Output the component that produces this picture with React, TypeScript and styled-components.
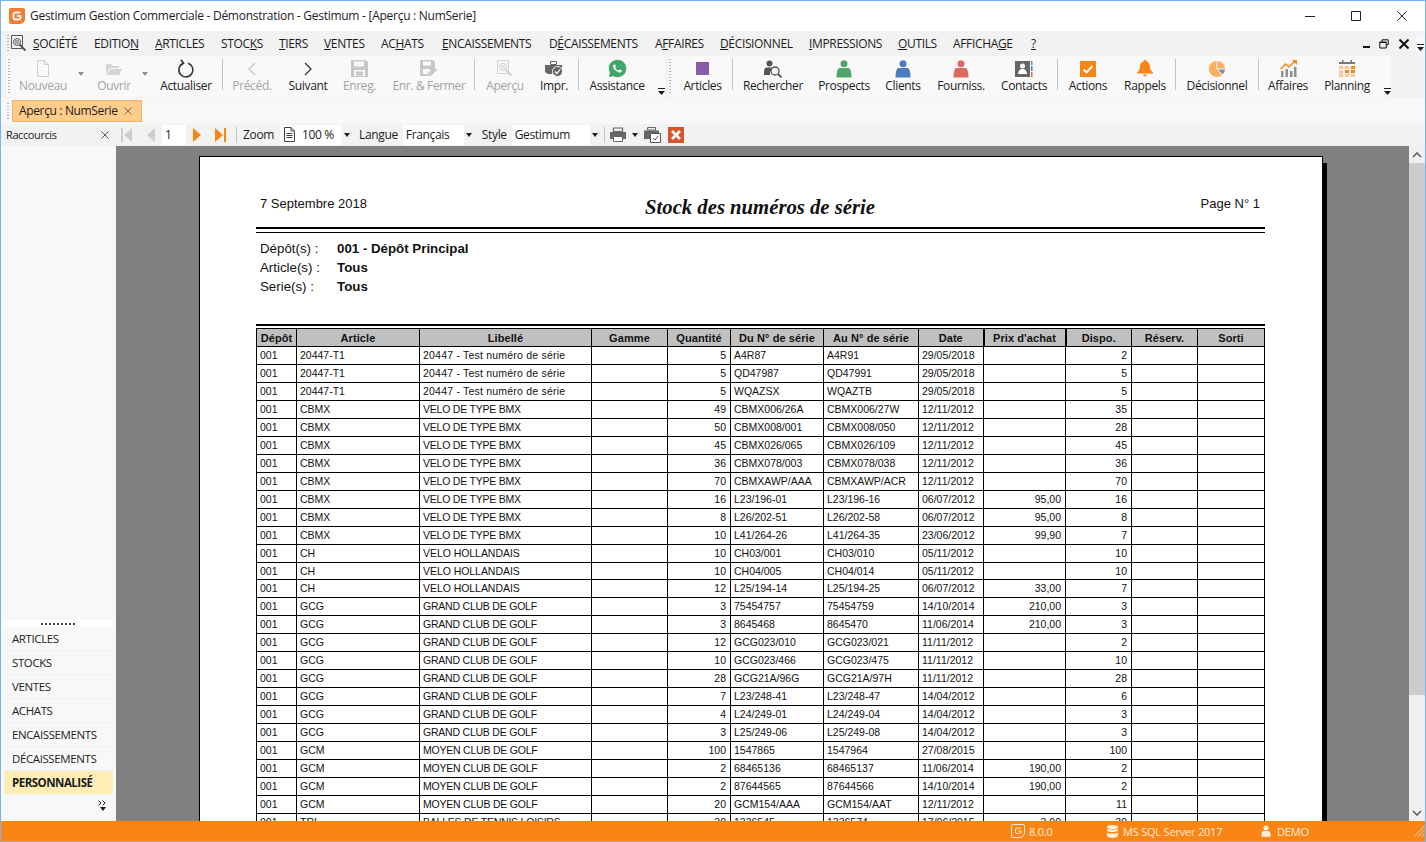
import React from 'react';
import styled, { createGlobalStyle } from 'styled-components';
import { RiWhatsappFill } from 'react-icons/ri';

const uiFont = `'Open Sans', 'Noto Sans', sans-serif`;
const paperFont = `'Liberation Sans', Arial, sans-serif`;

const GlobalStyle = createGlobalStyle`
  html, body {
    margin: 0;
    padding: 0;
    background: #fff;
  }
  * {
    box-sizing: border-box;
  }
`;

const Window = styled.div`
  width: 1426px;
  height: 842px;
  display: flex;
  flex-direction: column;
  overflow: hidden;
  border: 1px solid #74b6f4;
  font-family: ${uiFont};
  font-size: 12px;
  letter-spacing: -0.35px;
  color: #1c1c1c;
`;

const TitleBar = styled.div`
  height: 30px;
  flex: none;
  display: flex;
  align-items: center;
  padding-left: 8px;
  background: #fff;
`;

const TitleText = styled.div`
  margin-left: 5px;
  padding-bottom: 1px;
  font-size: 12px;
  letter-spacing: -0.27px;
`;

const WindowButtons = styled.div`
  margin-left: auto;
  display: flex;
`;

const WindowButton = styled.div`
  width: 46px;
  height: 30px;
  display: flex;
  align-items: center;
  justify-content: center;
`;

const MenuBar = styled.div`
  height: 25px;
  flex: none;
  display: flex;
  align-items: center;
  background: #f2f2f2;
  padding-left: 6px;
`;

const Grip = styled.div<{ $h: number; $mr?: number }>`
  width: 2px;
  height: ${(p) => p.$h}px;
  flex: none;
  margin-right: ${(p) => p.$mr ?? 0}px;
  background-image: linear-gradient(#b5b5b5 50%, transparent 50%);
  background-size: 2px 3px;
`;

const MenuIcon = styled.div`
  width: 24px;
  flex: none;
  display: flex;
  padding-left: 2px;
`;

const MenuItem = styled.div<{ $w: number }>`
  width: ${(p) => p.$w}px;
  flex: none;
  white-space: nowrap;
  font-size: 12px;
`;

const Key = styled.span`
  text-decoration: underline;
`;

const MdiButtons = styled.div`
  margin-left: auto;
  display: flex;
  align-items: center;
  gap: 7px;
  height: 100%;
`;

const MdiClose = styled.div`
  display: flex;
  margin-left: 3px;
`;

const MenuOverflow = styled.div`
  width: 9px;
  height: 21px;
  background: #f8f8f8;
  display: flex;
  align-items: flex-end;
  justify-content: center;
  padding-bottom: 3px;
`;

const ToolRow = styled.div`
  height: 42px;
  flex: none;
  display: flex;
  background: #f2f2f2;
  padding-left: 6px;
`;

const ToolGroup = styled.div<{ $ml?: number }>`
  height: 41px;
  display: flex;
  align-items: flex-start;
  margin-left: ${(p) => p.$ml ?? 0}px;
  background: #f9f9f9;
  border-radius: 0 4px 4px 0;
  padding: 3px 0 0 1px;
`;

const ToolButton = styled.div<{ $w: number; $off?: boolean }>`
  width: ${(p) => p.$w}px;
  flex: none;
  display: flex;
  flex-direction: column;
  align-items: center;
  color: ${(p) => (p.$off ? '#a3a3a3' : '#1c1c1c')};
`;

const ToolIcon = styled.div`
  height: 19px;
  display: flex;
  align-items: center;
  justify-content: center;
`;

const ToolLabel = styled.div`
  height: 18px;
  margin-top: -1px;
  line-height: 18px;
  white-space: nowrap;
`;

const ToolSep = styled.div<{ $ml?: number }>`
  width: 1px;
  height: 31px;
  flex: none;
  margin-left: ${(p) => p.$ml ?? 0}px;
  background: #c4c4c4;
`;

const ArrowSlot = styled.div<{ $w: number; $off?: boolean }>`
  width: ${(p) => p.$w}px;
  flex: none;
  padding-top: 13px;
  display: flex;
  justify-content: center;
`;

const Caret = styled.div<{ $c?: string }>`
  width: 0;
  height: 0;
  border-left: 3.5px solid transparent;
  border-right: 3.5px solid transparent;
  border-top: 4px solid ${(p) => p.$c ?? '#1c1c1c'};
`;

const OverflowSlot = styled.div<{ $w: number }>`
  width: ${(p) => p.$w}px;
  height: 36px;
  flex: none;
  display: flex;
  align-items: flex-end;
  justify-content: flex-end;
`;

const TabRow = styled.div`
  height: 26px;
  flex: none;
  display: flex;
  align-items: center;
  background: #f8f8f8;
  padding-left: 6px;
`;

const Tab = styled.div`
  width: 130px;
  height: 22px;
  margin-left: 3px;
  display: flex;
  align-items: center;
  gap: 6px;
  padding: 0 0 1px 6px;
  background: #ffcc8c;
  border: 1px solid #f5b06c;
`;

const NavRow = styled.div`
  height: 22px;
  flex: none;
  display: flex;
  align-items: center;
  padding-bottom: 1px;
  background: #f2f2f2;
`;

const ShortcutHead = styled.div`
  width: 115px;
  flex: none;
  display: flex;
  align-items: center;
  justify-content: space-between;
  padding: 0 7px 0 5px;
  font-size: 11px;
  letter-spacing: -0.4px;
`;

const NavSlot = styled.div<{ $w: number; $ml?: number }>`
  width: ${(p) => p.$w}px;
  margin-left: ${(p) => p.$ml ?? 0}px;
  flex: none;
  display: flex;
  align-items: center;
  justify-content: center;
`;

const NavLabel = styled.div<{ $ml: number }>`
  margin-left: ${(p) => p.$ml}px;
  white-space: nowrap;
`;

const NavSep = styled.div<{ $ml: number }>`
  width: 1px;
  height: 16px;
  margin-left: ${(p) => p.$ml}px;
  flex: none;
  background: #c4c4c4;
`;

const Field = styled.div<{ $w: number; $ml: number }>`
  width: ${(p) => p.$w}px;
  height: 20px;
  margin-left: ${(p) => p.$ml}px;
  flex: none;
  display: flex;
  align-items: center;
  background: #fff;
  padding-left: 3px;
  white-space: nowrap;
`;

const FieldButton = styled.div`
  width: 11px;
  height: 100%;
  margin-left: auto;
  display: flex;
  align-items: center;
  justify-content: center;
  background: #f2f2f2;
`;

const Body = styled.div`
  flex: 1;
  min-height: 0;
  display: flex;
`;

const Sidebar = styled.div`
  width: 115px;
  flex: none;
  display: flex;
  flex-direction: column;
  justify-content: flex-end;
  background: #f8f8f8;
  padding: 0 3px 4px 3px;
`;

const SideGrip = styled.div`
  height: 7px;
  display: flex;
  align-items: center;
  justify-content: center;
  background: #fff;
  &::before {
    content: '';
    width: 35px;
    height: 2px;
    background-image: linear-gradient(90deg, #3c4a44 50%, transparent 50%);
    background-size: 4px 2px;
  }
`;

const SideItem = styled.div<{ $on?: boolean }>`
  height: 24px;
  display: flex;
  align-items: center;
  padding-left: 8px;
  border-bottom: 1px solid #f1f1f1;
  font-size: 11.5px;
  font-weight: ${(p) => (p.$on ? 700 : 400)};
  letter-spacing: ${(p) => (p.$on ? '-0.5px' : '-0.4px')};
  background: ${(p) => (p.$on ? '#ffedb5' : 'transparent')};
`;

const SideMore = styled.div`
  height: 22px;
  display: flex;
  flex-direction: column;
  align-items: flex-end;
  padding: 5px 7px 0 0;
  gap: 1px;
`;

const Preview = styled.div`
  flex: 1;
  min-width: 0;
  overflow: hidden;
  background: #808080;
  padding: 10px 0 0 83px;
`;

const Page = styled.div`
  width: 1124px;
  height: 900px;
  background: #fff;
  border: 1px solid #000;
  box-shadow: 4px 7px 0 #000;
  padding: 0 56px;
  color: #111;
  font-family: ${paperFont};
  letter-spacing: 0;
`;

const PageHead = styled.div`
  display: grid;
  grid-template-columns: 1fr auto 1fr;
  height: 70px;
  padding: 39px 6px 0 4px;
  font-size: 13px;
  line-height: 16px;
`;

const ReportTitle = styled.div`
  font-family: 'Liberation Serif', 'Times New Roman', serif;
  font-size: 20.7px;
  font-weight: 700;
  font-style: italic;
  line-height: 22px;
`;

const RightText = styled.div`
  text-align: right;
`;

const DoubleRule = styled.div`
  height: 6px;
  width: 1009px;
  border-top: 2px solid #000;
  border-bottom: 1px solid #000;
`;

const Filters = styled.div`
  padding: 6px 0 0 4px;
  height: 91px;
`;

const FilterRow = styled.div`
  height: 19px;
  display: flex;
  align-items: center;
  font-size: 13.3px;
`;

const FilterLabel = styled.div`
  width: 77px;
`;

const FilterValue = styled.div`
  font-weight: 700;
`;

const HeavyRule = styled.div`
  height: 2px;
  width: 1009px;
  margin-bottom: 2px;
  background: #000;
`;

const Sheet = styled.table`
  width: 1008px;
  table-layout: fixed;
  border-collapse: collapse;
  font-size: 10.5px;
  line-height: 12px;
`;

const HeadCell = styled.th<{ $thick?: boolean }>`
  height: 18px;
  padding: 0;
  text-align: center;
  font-size: 11px;
  letter-spacing: 0.08px;
  font-weight: 700;
  background: #c0c0c0;
  border: 1px solid #000;
  border-left-width: ${(p) => (p.$thick ? 2 : 1)}px;
  white-space: nowrap;
  overflow: hidden;
`;

const Row = styled.tr<{ $h: number }>`
  height: ${(p) => p.$h}px;
`;

const Cell = styled.td<{ $num?: boolean; $track?: number }>`
  padding: 0 ${(p) => (p.$num ? 4 : 2)}px 1px 3px;
  border: 1px solid #000;
  text-align: ${(p) => (p.$num ? 'right' : 'left')};
  letter-spacing: ${(p) => p.$track ?? 0}px;
  white-space: nowrap;
  overflow: hidden;
`;

const ScrollBar = styled.div`
  width: 16px;
  flex: none;
  display: flex;
  flex-direction: column;
  background: #f0f0f0;
`;

const ScrollEnd = styled.div`
  height: 17px;
  flex: none;
  display: flex;
  align-items: center;
  justify-content: center;
`;

const ScrollThumb = styled.div`
  height: 532px;
  flex: none;
  background: #cdcdcd;
`;

const ScrollGap = styled.div`
  flex: 1;
`;

const StatusBar = styled.div`
  height: 20px;
  flex: none;
  display: flex;
  align-items: center;
  padding-left: 1010px;
  background: #f98516;
  color: #ffeeda;
  font-size: 11px;
  letter-spacing: -0.2px;
`;

const StatusItem = styled.div<{ $w: number; $gap: number }>`
  width: ${(p) => p.$w}px;
  flex: none;
  display: flex;
  align-items: center;
  gap: ${(p) => p.$gap}px;
  white-space: nowrap;
`;

const StatusGrip = styled.div`
  margin-left: auto;
  display: flex;
`;

type IconProps = { c?: string };

const DocIcon = () => (
  <svg width="18" height="19" viewBox="0 0 18 19" fill="none" stroke="#cfcfcf">
    <path d="M3.500 1.500h7l4 4v12h-11zM10.500 1.500v4h4" />
  </svg>
);

const FolderIcon = () => (
  <svg width="18" height="15" viewBox="0 0 18 15" fill="#d4d4d4">
    <path d="M1 3h5l2 2h6v2H5L1 13z" />
    <path d="M5.500 8H17l-3 6H1.500z" />
  </svg>
);

const RefreshIcon = () => (
  <svg width="18" height="19" viewBox="0 0 18 19" fill="none" stroke="#333" strokeWidth="1.500">
    <path d="M6 4.500a7 7 0 1 0 5-.3" />
    <path d="M4 .8l2.600 3.500-3.600 2" />
  </svg>
);

const ChevronIcon = ({ left, c }: { left?: boolean; c: string }) => (
  <svg width="10" height="14" viewBox="0 0 10 14" fill="none" stroke={c} strokeWidth="1.300">
    <path d={left ? 'M8 1L2 7l6 6' : 'M2 1l6 6-6 6'} />
  </svg>
);

const FloppyIcon = () => (
  <svg width="17" height="17" viewBox="0 0 17 17">
    <path fill="#c8c8c8" d="M0 0h15l2 2v15H0z" />
    <path fill="#f9f9f9" d="M3 1.500h10v5H3zM3 10h11v6H3z" />
    <path fill="#c8c8c8" d="M5 11.500h7v4H5z" />
  </svg>
);

const FloppyCheckIcon = () => (
  <svg width="18" height="18" viewBox="0 0 18 18">
    <path fill="#c8c8c8" d="M0 0h13l2 2v9l-5 5H0z" />
    <path fill="#f9f9f9" d="M3 1.500h8v4H3zM3 9h7v5H3z" />
    <path d="M8 12l3 3 6-6" fill="none" stroke="#c8c8c8" strokeWidth="1.500" />
  </svg>
);

const PreviewIcon = ({ c = '#d0d0d0' }: IconProps) => (
  <svg width="16" height="17" viewBox="0 0 16 17" fill="none" stroke={c}>
    <path d="M.5.5h11v13H.5z" />
    <circle cx="6" cy="7" r="3.500" />
    <path d="M8.500 9.500l6 6" strokeWidth="2" />
    <path d="M4 6h4M4 8h4" />
  </svg>
);

const PrinterCheckIcon = () => (
  <svg width="18" height="18" viewBox="0 0 18 18">
    <path fill="none" stroke="#666" d="M5.500 1.500h6v3h-6z" />
    <path fill="#666" d="M0 5h17v9H3l-3-2z" />
    <circle cx="12.500" cy="11.500" r="5" fill="#666" stroke="#f9f9f9" />
    <path d="M10 11.500l2 2 3-4" fill="none" stroke="#fff" strokeWidth="1.200" />
  </svg>
);

const PersonIcon = ({ c = '#000' }: IconProps) => (
  <svg width="16" height="18" viewBox="0 0 16 18" fill={c}>
    <circle cx="8" cy="3.800" r="3.500" />
    <path d="M3.500 8h9c1.500 0 3 3 3 9.500H.5C.5 11 2 8 3.500 8z" />
  </svg>
);

const SearchPersonIcon = () => (
  <svg width="19" height="18" viewBox="0 0 19 18">
    <circle cx="5.500" cy="3.500" r="3" fill="#555" />
    <path fill="#555" d="M2 7.500h7L6 12v3H0v-3c0-2 .8-4.500 2-4.500z" />
    <circle cx="11" cy="11" r="4" fill="#f9f9f9" stroke="#555" strokeWidth="1.300" />
    <path d="M14 14l3.500 3.500" stroke="#555" strokeWidth="1.800" />
  </svg>
);

const ContactsIcon = () => (
  <svg width="18" height="16" viewBox="0 0 18 16">
    <path fill="#666" d="M0 0h15v16H0z" />
    <circle cx="7.500" cy="5" r="2.500" fill="#fff" />
    <path fill="#fff" d="M3 13c0-3 1.500-5 4.500-5s4.500 2 4.500 5z" />
    <path fill="#5aa870" d="M16 0h1.500v4H16z" />
    <path fill="#4a7dbd" d="M16 5h1.500v5H16z" />
    <path fill="#e0695f" d="M16 11h1.500v5H16z" />
  </svg>
);

const ActionsIcon = () => (
  <svg width="16" height="16" viewBox="0 0 16 16">
    <path fill="#f98516" d="M0 0h16v16H0z" />
    <path d="M3.500 8.500l3 3 6-6.500" fill="none" stroke="#fff" strokeWidth="1.900" />
  </svg>
);

const BellIcon = () => (
  <svg width="16" height="18" viewBox="0 0 16 18" fill="#f98516">
    <path d="M8 0c1 0 1.400.6 1.400 1.300C12 2 12.800 4.200 13 7c.2 2.600 1.300 4 3 5.500v1H0v-1C1.700 11 2.800 9.600 3 7c.2-2.800 1-5 3.600-5.700C6.600.6 7 0 8 0z" />
    <path d="M6 14.500h4a2 2 0 0 1-4 0z" />
  </svg>
);

const PieIcon = () => (
  <svg width="16" height="16" viewBox="0 0 16 16">
    <path fill="#f9ae66" d="M7.500 0v8.300l5.600 5.700A8 8 0 1 1 7.500 0z" />
    <path fill="#f9ae66" d="M8.500 0A7.500 7.500 0 0 1 16 7.500H8.500z" />
    <path fill="#8c8c8c" d="M8.500 8.500H16a8 8 0 0 1-2.200 4.800z" />
  </svg>
);

const ChartIcon = () => (
  <svg width="17" height="17" viewBox="0 0 17 17">
    <path fill="#909090" d="M1 11h2.500v6H1zM5.500 9H8v8H5.500zM10 11h2.500v6H10zM14 7h2.500v10H14z" />
    <path d="M.5 9L5.500 4l3.500 3 6-6" fill="none" stroke="#f98516" strokeWidth="1.500" />
    <path fill="#f98516" d="M12 0h5v5z" />
  </svg>
);

const CalendarIcon = () => (
  <svg width="16" height="17" viewBox="0 0 16 17">
    <path fill="#777" d="M0 2h16v2H0zM3 0h1.500v3H3zM11.500 0H13v3h-1.500z" />
    <g fill="#fbc48c">
      <path d="M0 6h4v3H0zM6 6h4v3H6zM0 10.500h4v3H0zM12 14h4v3h-4zM6 14h4v3H6zM0 14h4v3H0z" />
    </g>
    <g fill="#f98516">
      <path d="M12 6h4v3h-4zM6 10h4v3H6zM12 10h4v3h-4z" />
    </g>
  </svg>
);

const OverflowMark = () => (
  <svg width="7" height="7" viewBox="0 0 7 7" fill="#1c1c1c">
    <path d="M0 0h7v1H0zM0 3h7L3.500 7z" />
  </svg>
);

const Logo = () => (
  <svg width="16" height="16" viewBox="0 0 16 16">
    <path fill="#f47b30" d="M2 0h12a2 2 0 0 1 2 2v9a5 5 0 0 1-5 5H2a2 2 0 0 1-2-2V2a2 2 0 0 1 2-2z" />
    <path d="M11.500 4.500h-5A2 2 0 0 0 4.500 6.500v3a2 2 0 0 0 2 2h3a2 2 0 0 0 2-2V8H8" fill="none" stroke="#fff" strokeWidth="1.800" />
  </svg>
);

const StatusLogo = () => (
  <svg width="14" height="14" viewBox="0 0 14 14" fill="none" stroke="#ffeeda">
    <path d="M1.500.5h11a1 1 0 0 1 1 1v7a5 5 0 0 1-5 5h-7a1 1 0 0 1-1-1v-11a1 1 0 0 1 1-1z" />
    <path d="M10 4H6a1.500 1.500 0 0 0-1.500 1.500v2.500A1.500 1.500 0 0 0 6 9.500h2.500A1.500 1.500 0 0 0 10 8V7H7" />
  </svg>
);

const DatabaseIcon = () => (
  <svg width="11" height="13" viewBox="0 0 11 13" fill="#ffeeda">
    <ellipse cx="5.500" cy="2" rx="5.500" ry="2" />
    <path d="M0 3.500c1 1.300 10 1.300 11 0v2.200c-1 1.800-10 1.800-11 0zM0 7.500c1 1.300 10 1.300 11 0v3.500c-1 2.600-10 2.600-11 0z" />
  </svg>
);

const NavFirstIcon = ({ c }: { c: string }) => (
  <svg width="12" height="16" viewBox="0 0 12 16" fill={c}>
    <path d="M0 1h2v14H0zM11 1v14L3 8z" />
  </svg>
);

const NavPrevIcon = ({ c }: { c: string }) => (
  <svg width="9" height="16" viewBox="0 0 9 16" fill={c}>
    <path d="M8 1v14L0 8z" />
  </svg>
);

const NavNextIcon = ({ c }: { c: string }) => (
  <svg width="9" height="16" viewBox="0 0 9 16" fill={c}>
    <path d="M1 1v14l8-7z" />
  </svg>
);

const NavLastIcon = ({ c }: { c: string }) => (
  <svg width="12" height="16" viewBox="0 0 12 16" fill={c}>
    <path d="M10 1h2v14h-2zM1 1v14l8-7z" />
  </svg>
);

const SmallDocIcon = () => (
  <svg width="13" height="15" viewBox="0 0 13 15" fill="none" stroke="#444">
    <path d="M1.500.5h6.500l3.500 3.500v10.500h-10zM8 .5V4h3.500M3.500 6.500h6M3.500 8.500h6M3.500 10.500h6" />
  </svg>
);

const NavPrinterIcon = () => (
  <svg width="16" height="15" viewBox="0 0 16 15">
    <path fill="none" stroke="#666" strokeWidth="1.200" d="M3.500 1h9v3.500h-9z" />
    <path fill="#666" d="M0 5h16v7h-3V9.500H3V12H0z" />
    <path fill="#fff" stroke="#666" d="M3.500 9.500h9v5h-9z" />
  </svg>
);

const NavPrinterCheckIcon = () => (
  <svg width="17" height="16" viewBox="0 0 17 16">
    <path fill="none" stroke="#666" d="M3.500.5h8V3h-8z" />
    <path fill="#666" d="M0 3.500h15V6H6v6H0z" />
    <path fill="#fff" stroke="#555" d="M6.500 6.500h10v9h-10z" />
    <path d="M9 11l2 2 3-4" fill="none" stroke="#555" />
  </svg>
);

const CloseBox = () => (
  <svg width="16" height="16" viewBox="0 0 16 16">
    <path fill="#d8542e" d="M0 0h16v16H0z" />
    <path d="M4 4l8 8M12 4l-8 8" stroke="#fff" strokeWidth="2.600" />
  </svg>
);

const Cross = ({ s = 9, c = '#333', w = 1 }: { s?: number; c?: string; w?: number }) => (
  <svg width={s} height={s} viewBox="0 0 10 10" stroke={c} strokeWidth={w}>
    <path d="M.5.5l9 9M9.500.5l-9 9" />
  </svg>
);

const menus: [string, string, string, number][] = [
  ['', 'S', 'OCIÉTÉ', 61],
  ['EDITIO', 'N', '', 61],
  ['', 'A', 'RTICLES', 66],
  ['STOC', 'K', 'S', 58],
  ['', 'T', 'IERS', 45],
  ['', 'V', 'ENTES', 57],
  ['AC', 'H', 'ATS', 61],
  ['', 'E', 'NCAISSEMENTS', 107],
  ['D', 'É', 'CAISSEMENTS', 106],
  ['A', 'F', 'FAIRES', 65],
  ['', 'D', 'ÉCISIONNEL', 89],
  ['', 'I', 'MPRESSIONS', 89],
  ['', 'O', 'UTILS', 55],
  ['AFFICHA', 'G', 'E', 78],
  ['', '?', '', 20],
];

const sideItems = ['ARTICLES', 'STOCKS', 'VENTES', 'ACHATS', 'ENCAISSEMENTS', 'DÉCAISSEMENTS'];

const heads = [
  'Dépôt',
  'Article',
  'Libellé',
  'Gamme',
  'Quantité',
  'Du N° de série',
  'Au N° de série',
  'Date',
  "Prix d'achat",
  'Dispo.',
  'Réserv.',
  'Sorti',
];
const colWidths = [40, 123, 172, 76, 63, 93, 95, 65, 82, 66, 66, 67];

const test = '20447 - Test numéro de série';
const bmx = 'VELO DE TYPE BMX';
const ch = 'VELO HOLLANDAIS';
const gcg = 'GRAND CLUB DE GOLF';
const gcm = 'MOYEN CLUB DE GOLF';

// article, libellé, quantité, du, au, date, prix, dispo
const stock: string[][] = [
  ['20447-T1', test, '5', 'A4R87', 'A4R91', '29/05/2018', '', '2'],
  ['20447-T1', test, '5', 'QD47987', 'QD47991', '29/05/2018', '', '5'],
  ['20447-T1', test, '5', 'WQAZSX', 'WQAZTB', '29/05/2018', '', '5'],
  ['CBMX', bmx, '49', 'CBMX006/26A', 'CBMX006/27W', '12/11/2012', '', '35'],
  ['CBMX', bmx, '50', 'CBMX008/001', 'CBMX008/050', '12/11/2012', '', '28'],
  ['CBMX', bmx, '45', 'CBMX026/065', 'CBMX026/109', '12/11/2012', '', '45'],
  ['CBMX', bmx, '36', 'CBMX078/003', 'CBMX078/038', '12/11/2012', '', '36'],
  ['CBMX', bmx, '70', 'CBMXAWP/AAA', 'CBMXAWP/ACR', '12/11/2012', '', '70'],
  ['CBMX', bmx, '16', 'L23/196-01', 'L23/196-16', '06/07/2012', '95,00', '16'],
  ['CBMX', bmx, '8', 'L26/202-51', 'L26/202-58', '06/07/2012', '95,00', '8'],
  ['CBMX', bmx, '10', 'L41/264-26', 'L41/264-35', '23/06/2012', '99,90', '7'],
  ['CH', ch, '10', 'CH03/001', 'CH03/010', '05/11/2012', '', '10'],
  ['CH', ch, '10', 'CH04/005', 'CH04/014', '05/11/2012', '', '10'],
  ['CH', ch, '12', 'L25/194-14', 'L25/194-25', '06/07/2012', '33,00', '7'],
  ['GCG', gcg, '3', '75454757', '75454759', '14/10/2014', '210,00', '3'],
  ['GCG', gcg, '3', '8645468', '8645470', '11/06/2014', '210,00', '3'],
  ['GCG', gcg, '12', 'GCG023/010', 'GCG023/021', '11/11/2012', '', '2'],
  ['GCG', gcg, '10', 'GCG023/466', 'GCG023/475', '11/11/2012', '', '10'],
  ['GCG', gcg, '28', 'GCG21A/96G', 'GCG21A/97H', '11/11/2012', '', '28'],
  ['GCG', gcg, '7', 'L23/248-41', 'L23/248-47', '14/04/2012', '', '6'],
  ['GCG', gcg, '4', 'L24/249-01', 'L24/249-04', '14/04/2012', '', '3'],
  ['GCG', gcg, '3', 'L25/249-06', 'L25/249-08', '14/04/2012', '', '3'],
  ['GCM', gcm, '100', '1547865', '1547964', '27/08/2015', '', '100'],
  ['GCM', gcm, '2', '68465136', '68465137', '11/06/2014', '190,00', '2'],
  ['GCM', gcm, '2', '87644565', '87644566', '14/10/2014', '190,00', '2'],
  ['GCM', gcm, '20', 'GCM154/AAA', 'GCM154/AAT', '12/11/2012', '', '11'],
  ['TRI', 'BALLES DE TENNIS LOISIRS', '30', '1336545', '1336574', '17/06/2015', '3,00', '30'],
];

const labelTrack = (label: string) => (label === test ? 0.21 : label === ch ? -0.05 : -0.22);

export default function App() {
  return (
    <Window>
      <GlobalStyle />
      <TitleBar>
        <Logo />
        <TitleText>Gestimum Gestion Commerciale - Démonstration - Gestimum - [Aperçu : NumSerie]</TitleText>
        <WindowButtons>
          <WindowButton>
            <svg width="10" height="10" viewBox="0 0 10 10" stroke="#222">
              <path d="M0 5.500h10" />
            </svg>
          </WindowButton>
          <WindowButton>
            <svg width="10" height="10" viewBox="0 0 10 10" fill="none" stroke="#222">
              <path d="M.5.5h9v9h-9z" />
            </svg>
          </WindowButton>
          <WindowButton>
            <Cross s={10} c="#222" />
          </WindowButton>
        </WindowButtons>
      </TitleBar>

      <MenuBar>
        <Grip $h={17} />
        <MenuIcon>
          <PreviewIcon c="#555" />
        </MenuIcon>
        {menus.map(([a, k, b, w]) => (
          <MenuItem key={a + k + b} $w={w}>
            {a}
            <Key>{k}</Key>
            {b}
          </MenuItem>
        ))}
        <MdiButtons>
          <svg width="10" height="10" viewBox="0 0 10 10" fill="#111">
            <path d="M1 7h7v2H1z" />
          </svg>
          <svg width="10" height="10" viewBox="0 0 10 10" fill="none" stroke="#111">
            <path d="M3 2.500V.8h6.200v5H7.500M.8 3h6.400v6H.8zM.8 3.500h6.400" />
          </svg>
          <MdiClose>
            <Cross s={10} c="#111" w={2} />
          </MdiClose>
          <MenuOverflow>
            <OverflowMark />
          </MenuOverflow>
        </MdiButtons>
      </MenuBar>

      <ToolRow>
        <ToolGroup>
          <Grip $h={36} $mr={2} />
          <ToolButton $w={62} $off>
            <ToolIcon>
              <DocIcon />
            </ToolIcon>
            <ToolLabel>Nouveau</ToolLabel>
          </ToolButton>
          <ArrowSlot $w={14}>
            <Caret $c="#909090" />
          </ArrowSlot>
          <ToolButton $w={52} $off>
            <ToolIcon>
              <FolderIcon />
            </ToolIcon>
            <ToolLabel>Ouvrir</ToolLabel>
          </ToolButton>
          <ArrowSlot $w={10}>
            <Caret $c="#909090" />
          </ArrowSlot>
          <ToolButton $w={72}>
            <ToolIcon>
              <RefreshIcon />
            </ToolIcon>
            <ToolLabel>Actualiser</ToolLabel>
          </ToolButton>
          <ToolSep />
          <ToolButton $w={58} $off>
            <ToolIcon>
              <ChevronIcon left c="#c8c8c8" />
            </ToolIcon>
            <ToolLabel>Précéd.</ToolLabel>
          </ToolButton>
          <ToolButton $w={54}>
            <ToolIcon>
              <ChevronIcon c="#333" />
            </ToolIcon>
            <ToolLabel>Suivant</ToolLabel>
          </ToolButton>
          <ToolButton $w={49} $off>
            <ToolIcon>
              <FloppyIcon />
            </ToolIcon>
            <ToolLabel>Enreg.</ToolLabel>
          </ToolButton>
          <ToolButton $w={90} $off>
            <ToolIcon>
              <FloppyCheckIcon />
            </ToolIcon>
            <ToolLabel>Enr. &amp; Fermer</ToolLabel>
          </ToolButton>
          <ToolSep />
          <ToolButton $w={60} $off>
            <ToolIcon>
              <PreviewIcon />
            </ToolIcon>
            <ToolLabel>Aperçu</ToolLabel>
          </ToolButton>
          <ToolButton $w={38}>
            <ToolIcon>
              <PrinterCheckIcon />
            </ToolIcon>
            <ToolLabel>Impr.</ToolLabel>
          </ToolButton>
          <ToolSep $ml={5} />
          <ToolButton $w={76}>
            <ToolIcon>
              <RiWhatsappFill size={21} color="#3fa866" />
            </ToolIcon>
            <ToolLabel>Assistance</ToolLabel>
          </ToolButton>
          <OverflowSlot $w={10}>
            <OverflowMark />
          </OverflowSlot>
        </ToolGroup>

        <ToolGroup $ml={3}>
          <Grip $h={36} $mr={5} />
          <ToolButton $w={53}>
            <ToolIcon>
              <svg width="13" height="13" viewBox="0 0 13 13">
                <path fill="#8a5aa8" d="M0 0h13v13H0z" />
              </svg>
            </ToolIcon>
            <ToolLabel>Articles</ToolLabel>
          </ToolButton>
          <ToolSep $ml={3} />
          <ToolButton $w={80}>
            <ToolIcon>
              <SearchPersonIcon />
            </ToolIcon>
            <ToolLabel>Rechercher</ToolLabel>
          </ToolButton>
          <ToolButton $w={62}>
            <ToolIcon>
              <PersonIcon c="#4fa56b" />
            </ToolIcon>
            <ToolLabel>Prospects</ToolLabel>
          </ToolButton>
          <ToolButton $w={56}>
            <ToolIcon>
              <PersonIcon c="#4a7dbd" />
            </ToolIcon>
            <ToolLabel>Clients</ToolLabel>
          </ToolButton>
          <ToolButton $w={60}>
            <ToolIcon>
              <PersonIcon c="#e0695f" />
            </ToolIcon>
            <ToolLabel>Fourniss.</ToolLabel>
          </ToolButton>
          <ToolButton $w={66}>
            <ToolIcon>
              <ContactsIcon />
            </ToolIcon>
            <ToolLabel>Contacts</ToolLabel>
          </ToolButton>
          <ToolSep />
          <ToolButton $w={60}>
            <ToolIcon>
              <ActionsIcon />
            </ToolIcon>
            <ToolLabel>Actions</ToolLabel>
          </ToolButton>
          <ToolButton $w={54}>
            <ToolIcon>
              <BellIcon />
            </ToolIcon>
            <ToolLabel>Rappels</ToolLabel>
          </ToolButton>
          <ToolSep $ml={3} />
          <ToolButton $w={82}>
            <ToolIcon>
              <PieIcon />
            </ToolIcon>
            <ToolLabel>Décisionnel</ToolLabel>
          </ToolButton>
          <ToolSep />
          <ToolButton $w={58}>
            <ToolIcon>
              <ChartIcon />
            </ToolIcon>
            <ToolLabel>Affaires</ToolLabel>
          </ToolButton>
          <ToolButton $w={60}>
            <ToolIcon>
              <CalendarIcon />
            </ToolIcon>
            <ToolLabel>Planning</ToolLabel>
          </ToolButton>
          <OverflowSlot $w={14}>
            <OverflowMark />
          </OverflowSlot>
        </ToolGroup>
      </ToolRow>

      <TabRow>
        <Grip $h={17} />
        <Tab>
          Aperçu : NumSerie
          <Cross s={8} c="#555" />
        </Tab>
      </TabRow>

      <NavRow>
        <ShortcutHead>
          Raccourcis
          <Cross s={8} c="#333" />
        </ShortcutHead>
        <NavSlot $w={12} $ml={5}>
          <NavFirstIcon c="#cdcdcd" />
        </NavSlot>
        <NavSlot $w={10} $ml={13}>
          <NavPrevIcon c="#cdcdcd" />
        </NavSlot>
        <Field $w={24} $ml={6}>
          1
        </Field>
        <NavSlot $w={10} $ml={5}>
          <NavNextIcon c="#f98516" />
        </NavSlot>
        <NavSlot $w={12} $ml={13}>
          <NavLastIcon c="#f98516" />
        </NavSlot>
        <NavSep $ml={10} />
        <NavLabel $ml={6}>Zoom</NavLabel>
        <Field $w={72} $ml={6}>
          <SmallDocIcon />
          <NavLabel $ml={6}>100 %</NavLabel>
          <FieldButton>
            <Caret />
          </FieldButton>
        </Field>
        <NavLabel $ml={7}>Langue</NavLabel>
        <Field $w={72} $ml={5}>
          Français
          <FieldButton>
            <Caret />
          </FieldButton>
        </Field>
        <NavLabel $ml={7}>Style</NavLabel>
        <Field $w={89} $ml={5}>
          Gestimum
          <FieldButton>
            <Caret />
          </FieldButton>
        </Field>
        <NavSep $ml={3} />
        <NavSlot $w={16} $ml={5}>
          <NavPrinterIcon />
        </NavSlot>
        <NavSlot $w={8} $ml={5}>
          <Caret />
        </NavSlot>
        <NavSlot $w={17} $ml={5}>
          <NavPrinterCheckIcon />
        </NavSlot>
        <NavSlot $w={16} $ml={7}>
          <CloseBox />
        </NavSlot>
      </NavRow>

      <Body>
        <Sidebar>
          <SideGrip />
          {sideItems.map((s) => (
            <SideItem key={s}>{s}</SideItem>
          ))}
          <SideItem $on>PERSONNALISÉ</SideItem>
          <SideMore>
            <svg width="8" height="6" viewBox="0 0 8 6" fill="none" stroke="#222">
              <path d="M.5.5L3 3 .5 5.500M4.500.5L7 3 4.500 5.500" />
            </svg>
            <Caret />
          </SideMore>
        </Sidebar>

        <Preview>
          <Page>
            <PageHead>
              <div>7 Septembre 2018</div>
              <ReportTitle>Stock des numéros de série</ReportTitle>
              <RightText>Page N° 1</RightText>
            </PageHead>
            <DoubleRule />
            <Filters>
              <FilterRow>
                <FilterLabel>Dépôt(s) :</FilterLabel>
                <FilterValue>001 - Dépôt Principal</FilterValue>
              </FilterRow>
              <FilterRow>
                <FilterLabel>Article(s) :</FilterLabel>
                <FilterValue>Tous</FilterValue>
              </FilterRow>
              <FilterRow>
                <FilterLabel>Serie(s) :</FilterLabel>
                <FilterValue>Tous</FilterValue>
              </FilterRow>
            </Filters>
            <HeavyRule />
            <Sheet>
              <colgroup>
                {colWidths.map((w, i) => (
                  <col key={i} width={w} />
                ))}
              </colgroup>
              <thead>
                <tr>
                  {heads.map((h, i) => (
                    <HeadCell key={h} $thick={i === 8 || i === 9}>
                      {h}
                    </HeadCell>
                  ))}
                </tr>
              </thead>
              <tbody>
                {stock.map((r, i) => (
                  <Row key={r[3]} $h={i === 12 ? 17 : 18}>
                    <Cell>001</Cell>
                    <Cell>{r[0]}</Cell>
                    <Cell $track={labelTrack(r[1])}>{r[1]}</Cell>
                    <Cell />
                    <Cell $num>{r[2]}</Cell>
                    <Cell>{r[3]}</Cell>
                    <Cell>{r[4]}</Cell>
                    <Cell>{r[5]}</Cell>
                    <Cell $num>{r[6]}</Cell>
                    <Cell $num>{r[7]}</Cell>
                    <Cell />
                    <Cell />
                  </Row>
                ))}
              </tbody>
            </Sheet>
          </Page>
        </Preview>

        <ScrollBar>
          <ScrollEnd>
            <svg width="10" height="6" viewBox="0 0 10 6" fill="none" stroke="#606060" strokeWidth="1.600">
              <path d="M1 5l4-4 4 4" />
            </svg>
          </ScrollEnd>
          <ScrollThumb />
          <ScrollGap />
          <ScrollEnd>
            <svg width="10" height="6" viewBox="0 0 10 6" fill="none" stroke="#606060" strokeWidth="1.600">
              <path d="M1 1l4 4 4-4" />
            </svg>
          </ScrollEnd>
        </ScrollBar>
      </Body>

      <StatusBar>
        <StatusItem $w={96} $gap={4}>
          <StatusLogo />
          8.0.0
        </StatusItem>
        <StatusItem $w={154} $gap={5}>
          <DatabaseIcon />
          MS SQL Server 2017
        </StatusItem>
        <StatusItem $w={60} $gap={6}>
          <svg width="10" height="12" viewBox="0 0 16 18" fill="#ffeeda">
            <circle cx="8" cy="4" r="4" />
            <path d="M3.500 9h9c1.500 0 3 3 3 9H.5c0-6 1.500-9 3-9z" />
          </svg>
          DEMO
        </StatusItem>
        <StatusGrip>
          <svg width="12" height="12" viewBox="0 0 12 12" stroke="#c9d4dc">
            <path d="M11.500 1L1 11.500M11.500 5L5 11.500M11.500 9L9 11.500" />
          </svg>
        </StatusGrip>
      </StatusBar>
    </Window>
  );
}
